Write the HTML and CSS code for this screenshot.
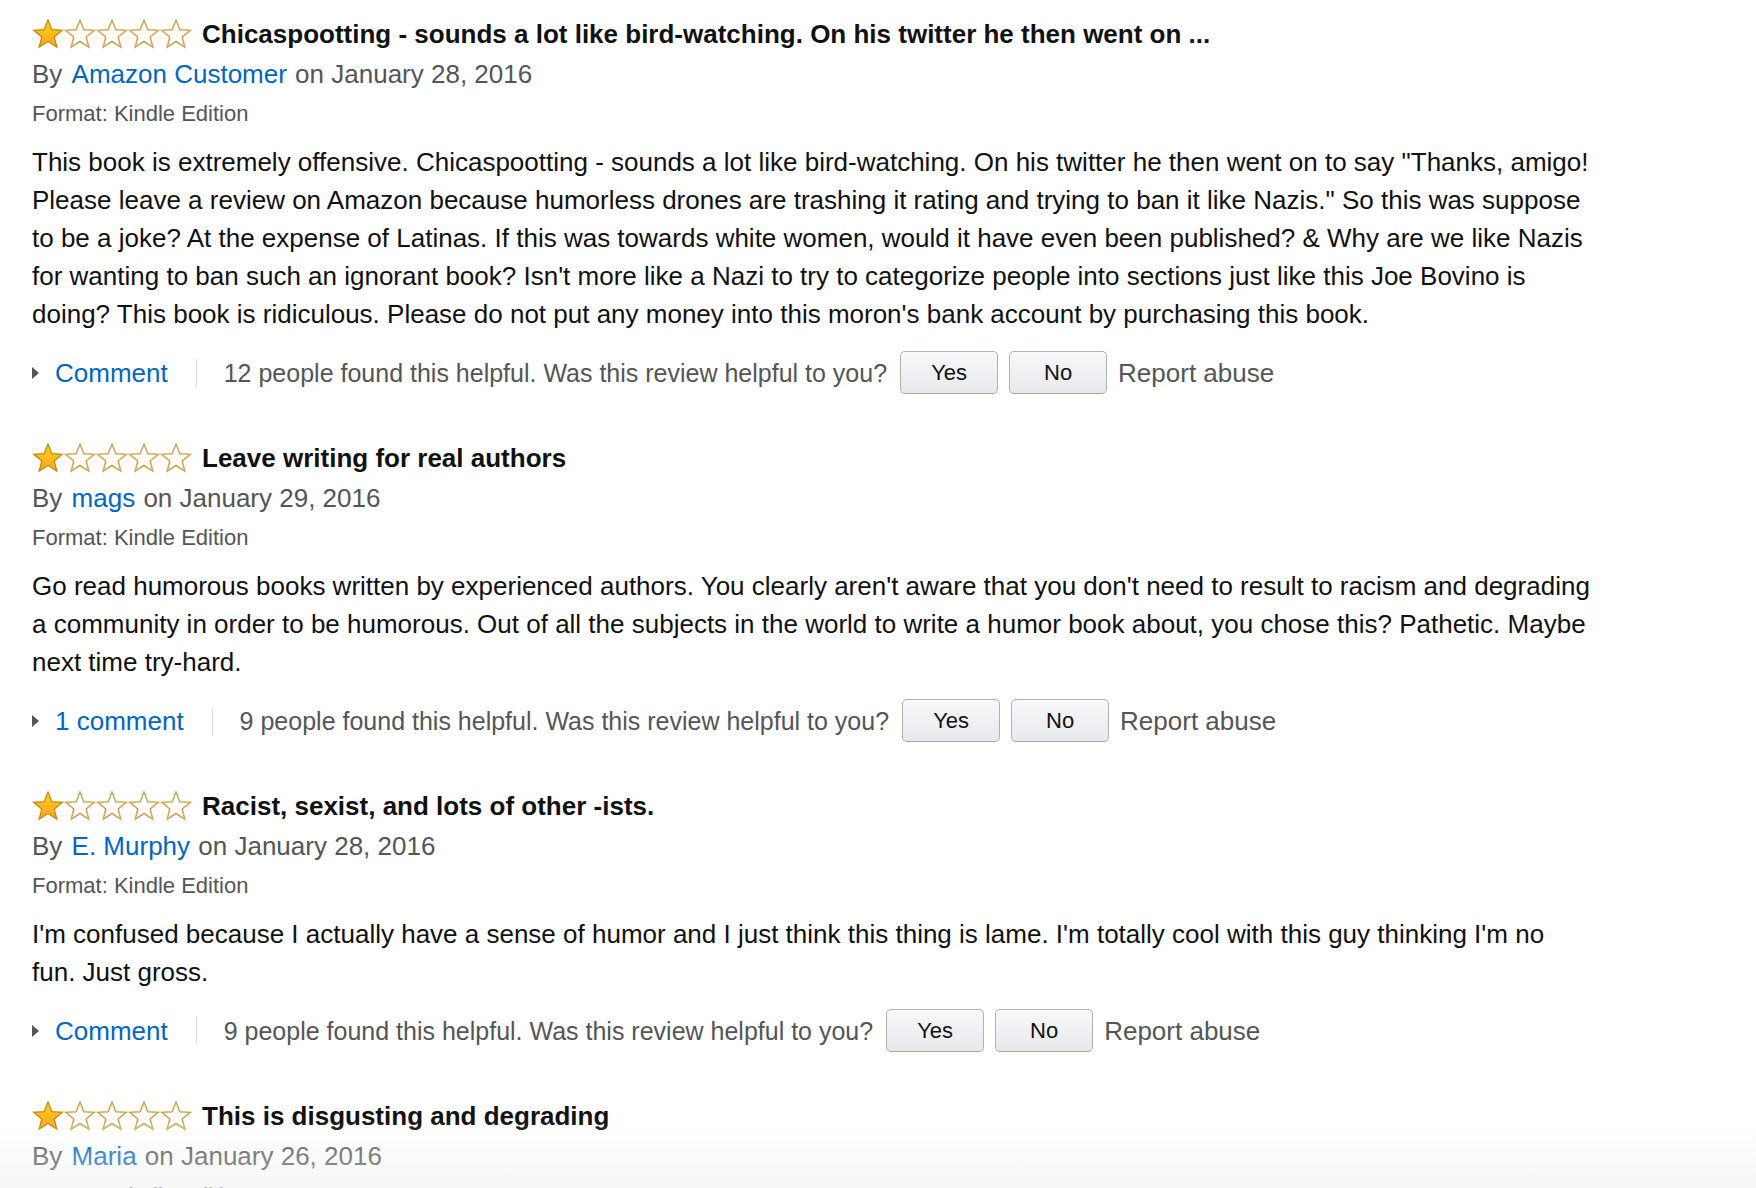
FILE: index.html
```html
<!DOCTYPE html>
<html lang="en">
<head>
  <meta charset="UTF-8">
  <title>Customer Reviews</title>
  <link rel="stylesheet" href="styles.css">
</head>
<body>

  <svg width="0" height="0" class="defs">
    <defs>
      <linearGradient id="gold" x1="0" y1="0" x2="0" y2="1">
        <stop offset="0" stop-color="#ffd21f"/>
        <stop offset="1" stop-color="#ffa41c"/>
      </linearGradient>
      <polygon id="star" points="16,1 19.82,10.74 30.27,11.36 22.18,18.01 24.82,28.14 16,22.5 7.18,28.14 9.82,18.01 1.73,11.36 12.18,10.74"/>
    </defs>
  </svg>

  <div class="reviews">

    <div class="review">
      <div class="review-head">
        <svg class="stars" viewBox="0 0 160 30"><use href="#star" class="full"/><use href="#star" x="32" class="empty"/><use href="#star" x="64" class="empty"/><use href="#star" x="96" class="empty"/><use href="#star" x="128" class="empty"/></svg>
        <a class="review-title">Chicaspootting - sounds a lot like bird-watching. On his twitter he then went on ...</a>
      </div>
      <div class="byline">By <a class="author">Amazon Customer</a> on January 28, 2016</div>
      <div class="format">Format: Kindle Edition</div>
      <div class="review-text">This book is extremely offensive. Chicaspootting - sounds a lot like bird-watching. On his twitter he then went on to say "Thanks, amigo! Please leave a review on Amazon because humorless drones are trashing it rating and trying to ban it like Nazis." So this was suppose to be a joke? At the expense of Latinas. If this was towards white women, would it have even been published? &amp; Why are we like Nazis for wanting to ban such an ignorant book? Isn't more like a Nazi to try to categorize people into sections just like this Joe Bovino is doing? This book is ridiculous. Please do not put any money into this moron's bank account by purchasing this book.</div>
      <div class="actions">
        <span class="caret"></span>
        <a class="comment-link">Comment</a>
        <span class="divider"></span>
        <span class="helpful">12 people found this helpful. Was this review helpful to you?</span>
        <button class="vote">Yes</button>
        <button class="vote">No</button>
        <a class="report">Report abuse</a>
      </div>
    </div>

    <div class="review">
      <div class="review-head">
        <svg class="stars" viewBox="0 0 160 30"><use href="#star" class="full"/><use href="#star" x="32" class="empty"/><use href="#star" x="64" class="empty"/><use href="#star" x="96" class="empty"/><use href="#star" x="128" class="empty"/></svg>
        <a class="review-title">Leave writing for real authors</a>
      </div>
      <div class="byline">By <a class="author">mags</a> on January 29, 2016</div>
      <div class="format">Format: Kindle Edition</div>
      <div class="review-text">Go read humorous books written by experienced authors. You clearly aren't aware that you don't need to result to racism and degrading a community in order to be humorous. Out of all the subjects in the world to write a humor book about, you chose this? Pathetic. Maybe next time try-hard.</div>
      <div class="actions">
        <span class="caret"></span>
        <a class="comment-link">1 comment</a>
        <span class="divider"></span>
        <span class="helpful">9 people found this helpful. Was this review helpful to you?</span>
        <button class="vote">Yes</button>
        <button class="vote">No</button>
        <a class="report">Report abuse</a>
      </div>
    </div>

    <div class="review">
      <div class="review-head">
        <svg class="stars" viewBox="0 0 160 30"><use href="#star" class="full"/><use href="#star" x="32" class="empty"/><use href="#star" x="64" class="empty"/><use href="#star" x="96" class="empty"/><use href="#star" x="128" class="empty"/></svg>
        <a class="review-title">Racist, sexist, and lots of other -ists.</a>
      </div>
      <div class="byline">By <a class="author">E. Murphy</a> on January 28, 2016</div>
      <div class="format">Format: Kindle Edition</div>
      <div class="review-text">I'm confused because I actually have a sense of humor and I just think this thing is lame. I'm totally cool with this guy thinking I'm no fun. Just gross.</div>
      <div class="actions">
        <span class="caret"></span>
        <a class="comment-link">Comment</a>
        <span class="divider"></span>
        <span class="helpful">9 people found this helpful. Was this review helpful to you?</span>
        <button class="vote">Yes</button>
        <button class="vote">No</button>
        <a class="report">Report abuse</a>
      </div>
    </div>

    <div class="review">
      <div class="review-head">
        <svg class="stars" viewBox="0 0 160 30"><use href="#star" class="full"/><use href="#star" x="32" class="empty"/><use href="#star" x="64" class="empty"/><use href="#star" x="96" class="empty"/><use href="#star" x="128" class="empty"/></svg>
        <a class="review-title">This is disgusting and degrading</a>
      </div>
      <div class="byline">By <a class="author">Maria</a> on January 26, 2016</div>
      <div class="format">Format: Kindle Edition</div>
    </div>

  </div>

  <div class="fade"></div>

</body>
</html>
```

FILE: styles.css
```css
html, body {
  height: 100%;
  overflow: hidden;
}
body {
  margin: 0;
  background: #fff;
  font-family: 'Liberation Sans', Arial, sans-serif;
  font-size: 26px;
  line-height: 38px;
  color: #111;
}
.defs {
  position: absolute;
}
.reviews {
  padding: 13px 32px 0;
}
.review {
  margin-bottom: 43px;
}
.review-head {
  display: flex;
  align-items: center;
  height: 42px;
}
.stars {
  width: 160px;
  height: 30px;
  margin-right: 10px;
  flex-shrink: 0;
}
.stars .full {
  fill: url(#gold);
  stroke: #c88a00;
  stroke-width: 1.3;
}
.stars .empty {
  fill: #fff;
  stroke: #cfa455;
  stroke-width: 1.5;
}
.review-title {
  font-weight: bold;
  color: #111;
  white-space: nowrap;
}
.byline {
  color: #555;
}
.author {
  color: #0066c0;
  margin-left: 2px;
  margin-right: 1px;
}
.format {
  margin-top: 5px;
  font-size: 22px;
  line-height: 32px;
  color: #555;
}
.review-text {
  margin-top: 13px;
  width: 1560px;
}
.actions {
  display: flex;
  align-items: center;
  margin-top: 18px;
  height: 43px;
  color: #555;
}
.caret {
  width: 0;
  height: 0;
  border-top: 6px solid transparent;
  border-bottom: 6px solid transparent;
  border-left: 7px solid #555;
  margin-right: 16px;
}
.comment-link {
  color: #0066c0;
}
.divider {
  width: 1px;
  height: 28px;
  background: #ddd;
  margin: 0 27px 0 28px;
}
.helpful {
  font-size: 25px;
  margin-right: 13px;
}
.vote {
  width: 98px;
  height: 43px;
  margin-right: 11px;
  padding: 0;
  font-family: 'Liberation Sans', Arial, sans-serif;
  font-size: 22px;
  color: #111;
  background: linear-gradient(#f7f8fa, #e7e9ec);
  border: 1px solid #adb1b8;
  border-bottom-color: #a2a6ac;
  border-radius: 5px;
  box-shadow: inset 0 1px 0 rgba(255,255,255,0.6);
}
.report {
  color: #555;
}
.fade {
  position: fixed;
  left: 0;
  right: 0;
  bottom: 0;
  height: 70px;
  background: linear-gradient(rgba(240,240,240,0), rgba(240,240,240,0.5));
}
```
